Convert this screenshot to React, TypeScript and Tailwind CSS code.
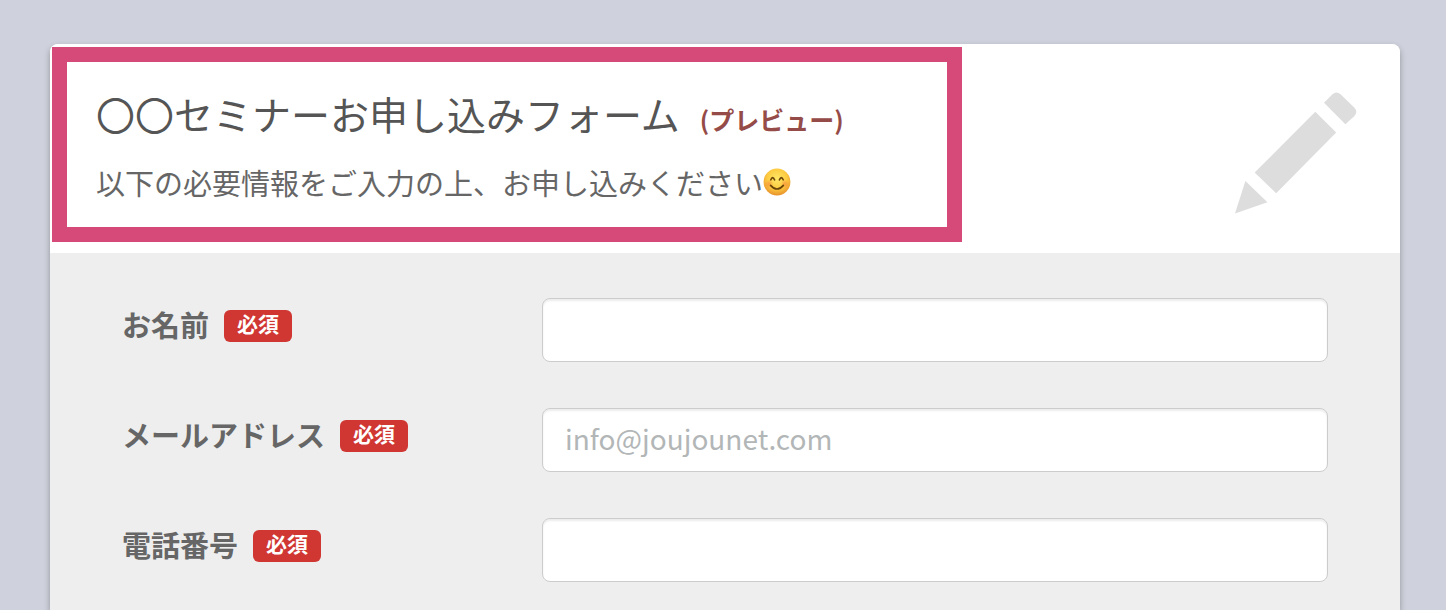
import React from "react";

const PencilIcon = () => (
  <svg
    viewBox="0 0 124 124"
    className="h-[124px] w-[124px] fill-[#dddddd]"
    aria-hidden="true"
  >
    <path d="M90 10.7 L98.2 2.4 Q102.5 -1.6 106.8 2.4 L120.2 15.6 Q124.4 20 120.2 24.2 L111.4 32.2 Z" />
    <path d="M81.3 19.7 L102.2 40.5 L42.2 101.3 L20.7 80.5 Z" />
    <path d="M11.4 89 L33.4 110.3 L1 121.4 Z" />
  </svg>
);

const SmileIcon = () => (
  <svg
    viewBox="0 0 28 28"
    className="h-7 w-7 shrink-0"
    role="img"
    aria-label="😊"
  >
    <defs>
      <radialGradient id="face" cx="50%" cy="38%" r="62%">
        <stop offset="0%" stopColor="#ffe766" />
        <stop offset="60%" stopColor="#fdcb41" />
        <stop offset="100%" stopColor="#e8922a" />
      </radialGradient>
      <radialGradient id="cheek">
        <stop offset="0%" stopColor="#f58a3c" stopOpacity="0.7" />
        <stop offset="100%" stopColor="#f58a3c" stopOpacity="0" />
      </radialGradient>
    </defs>
    <circle cx="14" cy="14" r="13.4" fill="url(#face)" />
    <circle cx="6" cy="16" r="4.5" fill="url(#cheek)" />
    <circle cx="22" cy="16" r="4.5" fill="url(#cheek)" />
    <g fill="none" stroke="#6b4408" strokeWidth="1.6" strokeLinecap="round">
      <path d="M7.8 11.8 Q9.6 7.4 11.6 11.8" />
      <path d="M16.4 11.8 Q18.4 7.4 20.2 11.8" />
      <path d="M7.6 17.4 Q14 24.6 20.4 17.4" />
    </g>
  </svg>
);

const App = () => {
  const fields = [
    {
      id: "name",
      label: "お名前",
      type: "text",
      placeholder: "",
    },
    {
      id: "email",
      label: "メールアドレス",
      type: "email",
      placeholder: "info@joujounet.com",
    },
    {
      id: "tel",
      label: "電話番号",
      type: "tel",
      placeholder: "",
    },
  ];

  return (
    <div
      lang="ja"
      className="flex min-h-screen flex-col bg-[#cfd2dc] pt-11 pr-[46px] pl-[50px] font-['Noto_Sans_CJK_JP',sans-serif]"
    >
      <main className="flex flex-1 flex-col rounded-t-lg bg-[#eeeeee] shadow-[0_3px_6px_rgba(0,0,0,0.3)]">
        {/* header */}
        <header className="flex rounded-t-lg bg-white pt-[3px] pb-[11px] pl-[2px]">
          <div className="flex-1 border-[15px] border-[#d54a79] px-[29px] pt-[21px] pb-6">
            <h1 className="text-[39px] leading-[60px] text-[#555555]">
              〇〇セミナーお申し込みフォーム
              <small className="ml-5 text-[25px] font-bold text-[#954b47]">
                (プレビュー)
              </small>
            </h1>
            <p className="mt-3 flex items-center text-[29px] leading-[42px] text-[#666666]">
              以下の必要情報をご入力の上、お申し込みください
              <SmileIcon />
            </p>
          </div>
          <div className="flex w-[438px] justify-end pt-[45px] pr-[42px]">
            <PencilIcon />
          </div>
        </header>

        {/* form */}
        <form className="flex flex-col gap-[46px] px-[72px] pt-[45px] pb-7">
          {fields.map((field) => (
            <div key={field.id} className="flex">
              <label
                htmlFor={field.id}
                className="flex w-[420px] shrink-0 items-start gap-[15px] pt-3 text-[29px] leading-7 font-bold text-[#666666]"
              >
                {field.label}
                <span className="h-8 rounded-md bg-[#d03632] px-[13px] text-[21px] leading-[26px] text-white">
                  必須
                </span>
              </label>
              <input
                id={field.id}
                type={field.type}
                placeholder={field.placeholder}
                className="h-16 min-w-0 flex-1 rounded-lg border border-[#cccccc] bg-white px-[22px] pb-1 text-[28px] text-[#555555] shadow-[inset_0_2px_2px_rgba(0,0,0,0.075)] placeholder:text-[#b2b6b7]"
              />
            </div>
          ))}
        </form>
      </main>
    </div>
  );
};

export default App;
